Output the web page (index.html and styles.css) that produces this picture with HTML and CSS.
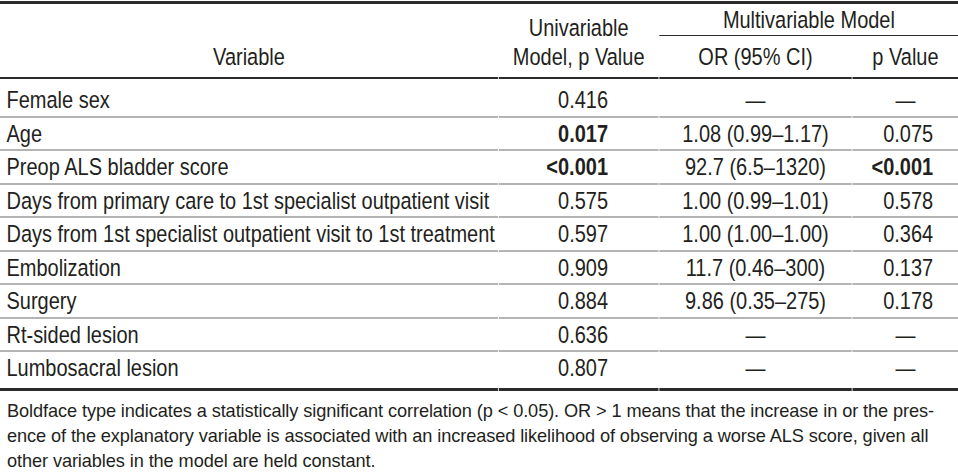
FILE: index.html
```html
<!DOCTYPE html>
<html lang="en">
<head>
<meta charset="utf-8">
<title>Table</title>
<link rel="stylesheet" href="styles.css">
</head>
<body>
<div class="frame">
<div class="wrap">
<table class="data">
  <colgroup>
    <col class="c-var">
    <col class="c-uni">
    <col class="c-or">
    <col class="c-p">
  </colgroup>
  <thead>
    <tr class="h1">
      <th rowspan="2" class="hvar">Variable</th>
      <th rowspan="2" class="huni">Univariable<br>Model, p Value</th>
      <th colspan="2" class="hmulti">Multivariable Model</th>
    </tr>
    <tr class="h2">
      <th class="hor">OR (95% CI)</th>
      <th class="hp">p Value</th>
    </tr>
  </thead>
  <tbody>
    <tr><td class="var">Female sex</td><td class="uni">0.416</td><td class="or">—</td><td class="p dash">—</td></tr>
    <tr><td class="var">Age</td><td class="uni b">0.017</td><td class="or">1.08 (0.99–1.17)</td><td class="p">0.075</td></tr>
    <tr><td class="var">Preop ALS bladder score</td><td class="uni b">&lt;0.001</td><td class="or">92.7 (6.5–1320)</td><td class="p b">&lt;0.001</td></tr>
    <tr><td class="var">Days from primary care to 1st specialist outpatient visit</td><td class="uni">0.575</td><td class="or">1.00 (0.99–1.01)</td><td class="p">0.578</td></tr>
    <tr><td class="var">Days from 1st specialist outpatient visit to 1st treatment</td><td class="uni">0.597</td><td class="or">1.00 (1.00–1.00)</td><td class="p">0.364</td></tr>
    <tr><td class="var">Embolization</td><td class="uni">0.909</td><td class="or">11.7 (0.46–300)</td><td class="p">0.137</td></tr>
    <tr><td class="var">Surgery</td><td class="uni">0.884</td><td class="or">9.86 (0.35–275)</td><td class="p">0.178</td></tr>
    <tr><td class="var">Rt-sided lesion</td><td class="uni">0.636</td><td class="or">—</td><td class="p dash">—</td></tr>
    <tr><td class="var">Lumbosacral lesion</td><td class="uni">0.807</td><td class="or">—</td><td class="p dash">—</td></tr>
  </tbody>
</table>
</div>
</div>
<p class="note">Boldface type indicates a statistically significant correlation (p &lt; 0.05). OR &gt; 1 means that the increase in or the pres-<br>ence of the explanatory variable is associated with an increased likelihood of observing a worse ALS score, given all<br>other variables in the model are held constant.</p>
</body>
</html>
```

FILE: styles.css
```css
html, body {
  margin: 0;
  padding: 0;
  background: #fff;
  overflow: hidden;
}
body {
  width: 958px;
  font-family: "Liberation Sans", Arial, sans-serif;
  color: #231f20;
}
.frame {
  width: 958px;
  height: 391px;
  overflow: hidden;
}
/* The source uses a condensed Helvetica; emulate it by narrowing Arial-metric text */
.wrap {
  width: 1176px;
  padding-top: 1px;
  transform: scaleX(0.815);
  transform-origin: 0 0;
}
.data {
  width: 1178px;
  table-layout: fixed;
  border-collapse: separate;
  border-spacing: 1px 0;
  margin: 0 -1px;
  font-size: 24.5px;
  border-top: 3px solid #2b2b2b;
}
.c-var { width: 611px; }
.c-uni { width: 196px; }
.c-or { width: 236px; }
.c-p { width: 130px; }

th {
  font-weight: normal;
  padding: 0;
  line-height: 29px;
  text-align: center;
}
.h1 th { height: 30px; }
.hvar, .huni {
  vertical-align: bottom;
  padding-bottom: 6px;
  border-bottom: 2px solid #2b2b2b;
}
.hmulti {
  vertical-align: top;
  padding-top: 1px;
  height: 29px;
  border-bottom: 1px solid #2b2b2b;
}
.h2 th {
  height: 35px;
  vertical-align: bottom;
  padding-bottom: 6px;
  border-bottom: 2px solid #2b2b2b;
}

td {
  padding: 0;
  height: 31.5px;
  line-height: 31.5px;
  border-bottom: 2px solid #b4b4b4;
  white-space: nowrap;
}
tbody tr:first-child td {
  padding-top: 5px;
  height: 31px;
}
tbody tr:last-child td {
  border-bottom: 3px solid #2b2b2b;
  padding-bottom: 4px;
  height: 32px;
}
.var { padding-left: 8px; text-align: left; }
.uni { text-align: right; padding-right: 62px; }
.or { text-align: center; }
.p { text-align: right; padding-right: 31px; }
.p.dash { text-align: center; padding-right: 0; }
.b { font-weight: bold; }

.note {
  margin: 8px 0 0;
  padding-left: 7px;
  font-size: 18.2px;
  line-height: 25px;
  letter-spacing: -0.1px;
  color: #231f20;
  white-space: nowrap;
}
```
